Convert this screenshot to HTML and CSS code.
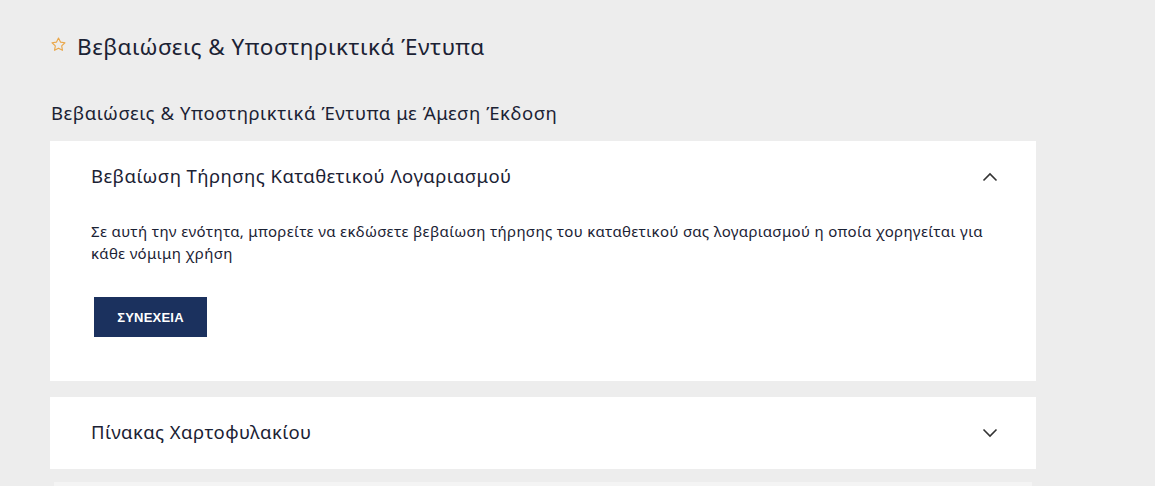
FILE: index.html
```html
<!DOCTYPE html>
<html lang="el">
<head>
<meta charset="utf-8">
<link rel="stylesheet" href="styles.css">
</head>
<body>
<main class="page">
  <h1 class="page-title">
    <svg class="star" width="17" height="17" viewBox="0 0 24 24" fill="none" stroke="#eaa74a" stroke-width="1.6" stroke-linejoin="round"><path d="M12 2.8l2.8 5.8 6.3.9-4.6 4.4 1.1 6.3L12 17.2l-5.6 3 1.1-6.3L2.9 9.5l6.3-.9z"/></svg>
    <span>Βεβαιώσεις &amp; Υποστηρικτικά Έντυπα</span>
  </h1>
  <h2 class="section-title">Βεβαιώσεις &amp; Υποστηρικτικά Έντυπα με Άμεση Έκδοση</h2>
  <div class="list">
    <section class="card open">
      <div class="card-head">
        <span class="card-title">Βεβαίωση Τήρησης Καταθετικού Λογαριασμού</span>
        <svg class="chev" width="16" height="10" viewBox="0 0 16 10" fill="none" stroke="#333" stroke-width="1.6"><path d="M1.5 8.5L8 2l6.5 6.5"/></svg>
      </div>
      <div class="card-body">
        <p>Σε αυτή την ενότητα, μπορείτε να εκδώσετε βεβαίωση τήρησης του καταθετικού σας λογαριασμού η οποία χορηγείται για κάθε νόμιμη χρήση</p>
        <button class="btn">ΣΥΝΕΧΕΙΑ</button>
      </div>
    </section>
    <section class="card">
      <div class="card-head">
        <span class="card-title">Πίνακας Χαρτοφυλακίου</span>
        <svg class="chev" width="16" height="10" viewBox="0 0 16 10" fill="none" stroke="#333" stroke-width="1.6"><path d="M1.5 1.5L8 8l6.5-6.5"/></svg>
      </div>
    </section>
    <section class="card next"></section>
  </div>
</main>
</body>
</html>
```
FILE: styles.css
```css
* { box-sizing: border-box; }
html, body { margin: 0; background: #ededed; }
body {
  font-family: "Noto Sans", "DejaVu Sans", sans-serif;
  color: #1b2234;
  overflow: hidden;
  height: 486px;
}
.page {
  padding: 30px 0 0 50px;
  width: 1036px;
}
.page-title {
  display: flex;
  align-items: center;
  gap: 10px;
  margin: 0;
  font-size: 22.5px;
  letter-spacing: 0.5px;
  font-weight: 400;
  height: 32px;
}
.star { flex: none; margin-top: -4px; }
.section-title {
  margin: 38px 0 0 1px;
  font-size: 18.5px;
  letter-spacing: 0.55px;
  font-weight: 400;
  height: 26px;
  line-height: 26px;
}
.list {
  margin-top: 15px;
  display: flex;
  flex-direction: column;
  gap: 16px;
}
.card {
  background: #fff;
}
.card-head {
  display: flex;
  align-items: center;
  justify-content: space-between;
  height: 72px;
  padding: 0 38px 0 41px;
}
.card-title { font-size: 18.5px; letter-spacing: 0.45px; margin-bottom: 4px; }
.card-body {
  padding: 7px 41px 44px 41px;
}
.card-body p {
  margin: 0;
  font-size: 15px;
  letter-spacing: 0.35px;
  line-height: 22px;
  max-width: 910px;
}
.btn {
  margin: 33px 0 0 3px;
  width: 113px;
  height: 40px;
  border: 0;
  background: #1b315e;
  color: #fff;
  font-family: "Liberation Sans", Arial, sans-serif;
  font-weight: 700;
  font-size: 13px;
  letter-spacing: 0.2px;
}
.card.next {
  margin-top: -3px;
  margin-left: 4px;
  width: 978px;
  height: 60px;
  background: #f4f4f4;
}
```
